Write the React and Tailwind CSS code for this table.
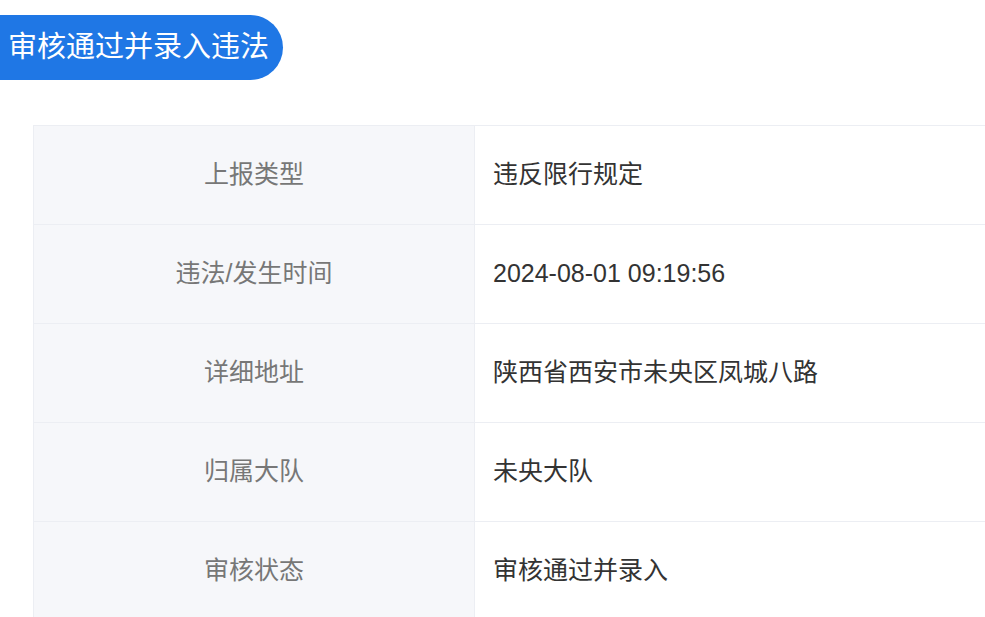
const rows = [
  { label: "上报类型", value: "违反限行规定" },
  { label: "违法/发生时间", value: "2024-08-01 09:19:56" },
  { label: "详细地址", value: "陕西省西安市未央区凤城八路" },
  { label: "归属大队", value: "未央大队" },
  { label: "审核状态", value: "审核通过并录入" },
];

export default function App() {
  return (
    <div
      className="w-[985px] h-[617px] overflow-hidden bg-white"
      style={{ fontFamily: '"Liberation Sans", "Noto Sans CJK SC", sans-serif' }}
    >
      {/* title pill */}
      <div className="pt-[15px]">
        <div className="flex h-[65px] w-[283px] items-center whitespace-nowrap rounded-r-full bg-[#1f77e5] pl-[8px] text-[29px] leading-none text-white">
          审核通过并录入违法
        </div>
      </div>

      {/* detail table */}
      <div className="ml-[33px] mt-[45px] w-[1100px] border-l border-t border-[#eceef3]">
        {rows.map((r) => (
          <div key={r.label} className="flex h-[99px] border-b border-[#eceef3]">
            <div className="flex w-[441px] items-center justify-center border-r border-[#eceef3] bg-[#f6f7fa] text-[25px] text-[#777777]">
              {r.label}
            </div>
            <div className="flex flex-1 items-center pl-[18px] text-[25px] text-[#333333]">
              {r.value}
            </div>
          </div>
        ))}
      </div>
    </div>
  );
}
